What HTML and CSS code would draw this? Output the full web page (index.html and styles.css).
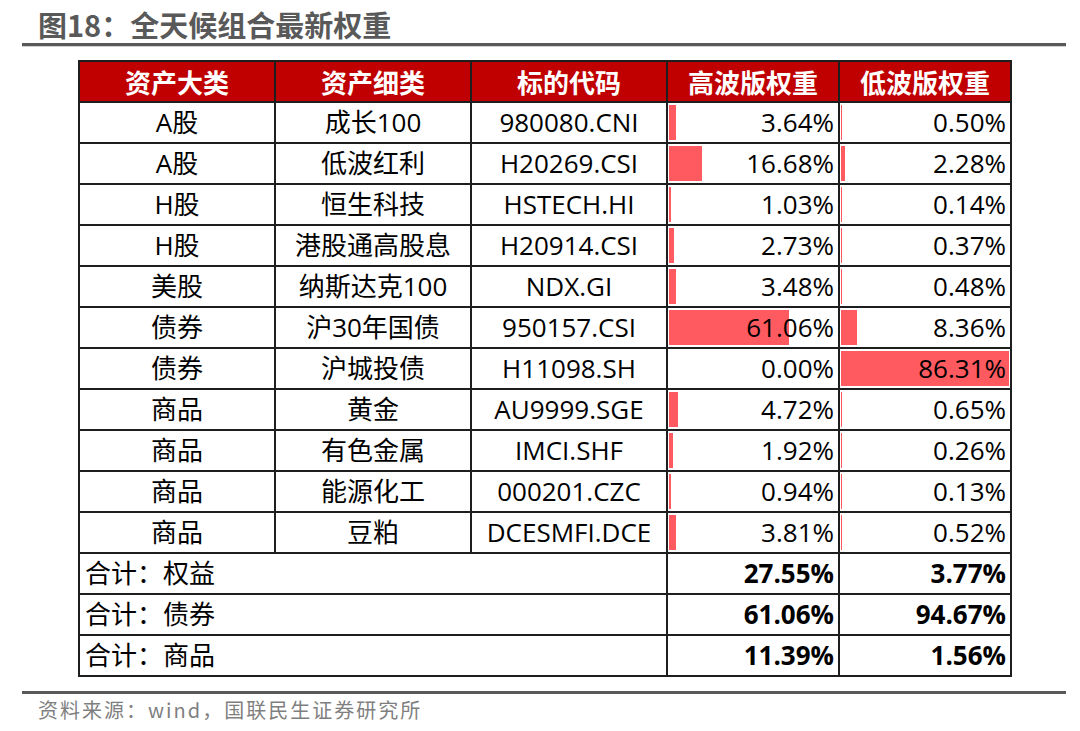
FILE: index.html
```html
<!DOCTYPE html>
<html lang="zh-CN">
<head>
<meta charset="utf-8">
<title>全天候组合最新权重</title>
<link rel="stylesheet" href="styles.css">
</head>
<body>
<div class="figure">
  <h1 class="title">图18：全天候组合最新权重</h1>
  <table class="weights">
    <colgroup>
      <col class="c-cat"><col class="c-sub"><col class="c-code"><col class="c-w"><col class="c-w">
    </colgroup>
    <thead>
      <tr><th>资产大类</th><th>资产细类</th><th>标的代码</th><th>高波版权重</th><th>低波版权重</th></tr>
    </thead>
    <tbody>
      <tr><td>A股</td><td>成长100</td><td>980080.CNI</td>
        <td class="num"><span class="bar" style="width:4.22%"></span><span class="val">3.64%</span></td>
        <td class="num"><span class="bar" style="width:0.58%"></span><span class="val">0.50%</span></td></tr>
      <tr><td>A股</td><td>低波红利</td><td>H20269.CSI</td>
        <td class="num"><span class="bar" style="width:19.33%"></span><span class="val">16.68%</span></td>
        <td class="num"><span class="bar" style="width:2.64%"></span><span class="val">2.28%</span></td></tr>
      <tr><td>H股</td><td>恒生科技</td><td>HSTECH.HI</td>
        <td class="num"><span class="bar" style="width:1.19%"></span><span class="val">1.03%</span></td>
        <td class="num"><span class="bar" style="width:0.16%"></span><span class="val">0.14%</span></td></tr>
      <tr><td>H股</td><td>港股通高股息</td><td>H20914.CSI</td>
        <td class="num"><span class="bar" style="width:3.16%"></span><span class="val">2.73%</span></td>
        <td class="num"><span class="bar" style="width:0.43%"></span><span class="val">0.37%</span></td></tr>
      <tr><td>美股</td><td>纳斯达克100</td><td>NDX.GI</td>
        <td class="num"><span class="bar" style="width:4.03%"></span><span class="val">3.48%</span></td>
        <td class="num"><span class="bar" style="width:0.56%"></span><span class="val">0.48%</span></td></tr>
      <tr><td>债券</td><td>沪30年国债</td><td>950157.CSI</td>
        <td class="num"><span class="bar" style="width:70.74%"></span><span class="val">61.06%</span></td>
        <td class="num"><span class="bar" style="width:9.69%"></span><span class="val">8.36%</span></td></tr>
      <tr><td>债券</td><td>沪城投债</td><td>H11098.SH</td>
        <td class="num"><span class="val">0.00%</span></td>
        <td class="num"><span class="bar" style="width:100%"></span><span class="val">86.31%</span></td></tr>
      <tr><td>商品</td><td>黄金</td><td>AU9999.SGE</td>
        <td class="num"><span class="bar" style="width:5.47%"></span><span class="val">4.72%</span></td>
        <td class="num"><span class="bar" style="width:0.75%"></span><span class="val">0.65%</span></td></tr>
      <tr><td>商品</td><td>有色金属</td><td>IMCI.SHF</td>
        <td class="num"><span class="bar" style="width:2.22%"></span><span class="val">1.92%</span></td>
        <td class="num"><span class="bar" style="width:0.30%"></span><span class="val">0.26%</span></td></tr>
      <tr><td>商品</td><td>能源化工</td><td>000201.CZC</td>
        <td class="num"><span class="bar" style="width:1.09%"></span><span class="val">0.94%</span></td>
        <td class="num"><span class="bar" style="width:0.15%"></span><span class="val">0.13%</span></td></tr>
      <tr><td>商品</td><td>豆粕</td><td>DCESMFI.DCE</td>
        <td class="num"><span class="bar" style="width:4.41%"></span><span class="val">3.81%</span></td>
        <td class="num"><span class="bar" style="width:0.60%"></span><span class="val">0.52%</span></td></tr>
      <tr class="total"><td colspan="3" class="label">合计：权益</td><td class="num"><span class="val">27.55%</span></td><td class="num"><span class="val">3.77%</span></td></tr>
      <tr class="total"><td colspan="3" class="label">合计：债券</td><td class="num"><span class="val">61.06%</span></td><td class="num"><span class="val">94.67%</span></td></tr>
      <tr class="total"><td colspan="3" class="label">合计：商品</td><td class="num"><span class="val">11.39%</span></td><td class="num"><span class="val">1.56%</span></td></tr>
    </tbody>
  </table>
  <div class="source">资料来源：wind，国联民生证券研究所</div>
</div>
</body>
</html>
```
FILE: styles.css
```css
html, body {
  margin: 0;
  padding: 0;
  background: #ffffff;
}

body {
  font-family: "Open Sans", "Noto Sans CJK SC", sans-serif;
  color: #000000;
}

.figure {
  margin-left: 22px;
  width: 1044px;
}

.title {
  margin: 0;
  padding: 5px 0 0 16px;
  height: 38px;
  line-height: 38px;
  font-family: "Noto Sans CJK SC", sans-serif;
  font-size: 29px;
  font-weight: 700;
  color: #595959;
  border-bottom: 3px solid #595959;
  box-shadow: 0 1px 0 #cfcfcf;
}

.weights {
  margin: 14px 0 0 56px;
  border-collapse: collapse;
  table-layout: fixed;
  width: 932px;
  font-size: 26px;
}

.c-cat, .c-sub, .c-code { width: 196px; }
.c-w { width: 172px; }

.weights th,
.weights td {
  border: 2px solid #1e1e1e;
  height: 39px;
  padding: 0;
  text-align: center;
  vertical-align: middle;
  line-height: 39px;
  white-space: nowrap;
}

.weights th {
  background: #c00000;
  color: #ffffff;
  font-family: "Noto Sans CJK SC", sans-serif;
  font-weight: 700;
  font-size: 26px;
}

.weights td.num {
  position: relative;
  text-align: right;
  padding-right: 4px;
}

.bar {
  position: absolute;
  left: 1px;
  top: 2px;
  bottom: 2px;
  max-width: calc(100% - 2px);
  background: #ff5a5f;
}

.val {
  position: relative;
}

.weights td.label {
  text-align: left;
  padding-left: 5px;
}

.total .num {
  font-weight: 700;
}

.source {
  margin-top: 14px;
  border-top: 3px solid #595959;
  padding: 4px 0 0 16px;
  font-family: "Noto Sans CJK SC", sans-serif;
  font-size: 20px;
  letter-spacing: 2px;
  line-height: 24px;
  color: #7f7f7f;
}
```
